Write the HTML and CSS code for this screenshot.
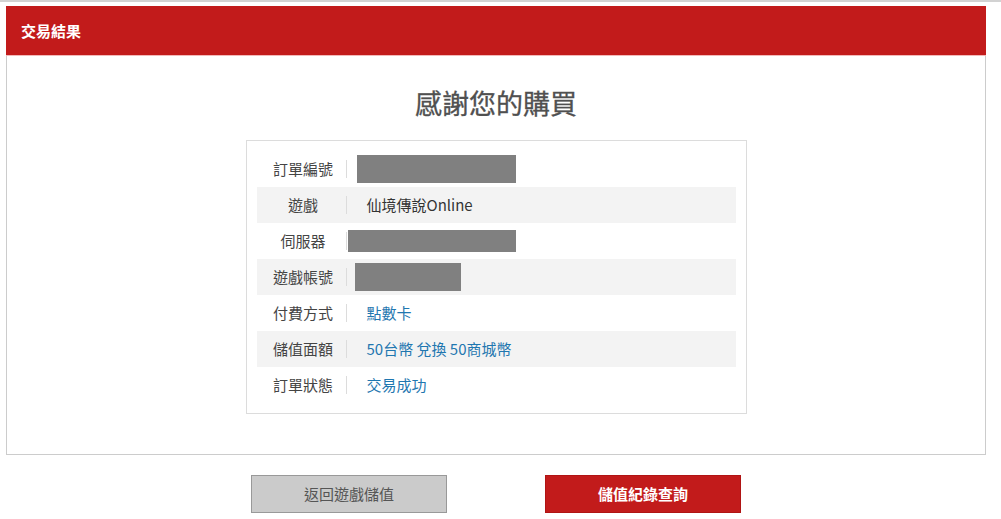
FILE: index.html
```html
<!DOCTYPE html>
<html lang="zh-Hant">
<head>
<meta charset="utf-8">
<title>交易結果</title>
<link rel="stylesheet" href="styles.css">
</head>
<body>
<div class="page">
  <div class="panel">
    <div class="panel-head">交易結果</div>
    <div class="panel-body">
      <h1 class="title">感謝您的購買</h1>
      <div class="info-box">
        <div class="row">
          <div class="label">訂單編號</div>
          <div class="value"><span class="mask mask-order"></span></div>
        </div>
        <div class="row alt">
          <div class="label">遊戲</div>
          <div class="value">仙境傳說Online</div>
        </div>
        <div class="row">
          <div class="label">伺服器</div>
          <div class="value"><span class="mask mask-server"></span></div>
        </div>
        <div class="row alt">
          <div class="label">遊戲帳號</div>
          <div class="value"><span class="mask mask-account"></span></div>
        </div>
        <div class="row">
          <div class="label">付費方式</div>
          <div class="value link">點數卡</div>
        </div>
        <div class="row alt">
          <div class="label">儲值面額</div>
          <div class="value link">50台幣 兌換 50商城幣</div>
        </div>
        <div class="row">
          <div class="label">訂單狀態</div>
          <div class="value link">交易成功</div>
        </div>
      </div>
    </div>
  </div>
  <div class="actions">
    <a class="btn btn-gray" href="#">返回遊戲儲值</a>
    <a class="btn btn-red" href="#">儲值紀錄查詢</a>
  </div>
</div>
</body>
</html>
```

FILE: styles.css
```css
* { box-sizing: border-box; }
html, body { margin: 0; padding: 0; background: #fff; }
body {
  font-family: "Noto Sans CJK TC", "Noto Sans", sans-serif;
  color: #444;
  font-size: 15px;
}
.page {
  border-top: 2px solid #d2d2d2;
  padding: 4px 15px 0 6px;
  width: 1001px;
}
.panel { width: 980px; }
.panel-head {
  height: 50px;
  background: #c21b1b;
  color: #fff;
  font-weight: bold;
  font-size: 15px;
  line-height: 50px;
  padding-left: 15px;
  border-bottom: 1px solid #f3b9b9;
}
.panel-body {
  border: 1px solid #cccccc;
  border-top: none;
  width: 980px;
  padding: 28px 0 40px;
  display: flex;
  flex-direction: column;
  align-items: center;
}
.title {
  margin: 0 0 18px;
  font-size: 27px;
  line-height: 38px;
  font-weight: normal;
  color: #505050;
  -webkit-text-stroke: 0.3px #505050;
}
.info-box {
  width: 501px;
  border: 1px solid #dcdcdc;
  padding: 10px;
}
.row {
  height: 36px;
  display: flex;
  align-items: center;
}
.row.alt { background: #f3f3f3; }
.label {
  width: 90px;
  height: 18px;
  line-height: 18px;
  text-align: center;
  border-right: 1px solid #dcdcdc;
  color: #444;
  padding-left: 4px;
}
.value {
  padding-left: 20px;
  color: #333;
  line-height: 18px;
  display: flex;
  align-items: center;
}
.value.link { color: #1f77b0; }
.mask {
  display: block;
  background: #808080;
}
.mask-order { width: 159px; height: 28px; margin-left: -10px; }
.mask-server { width: 168px; height: 22px; margin-left: -19px; }
.mask-account { width: 106px; height: 28px; margin-left: -12px; }
.actions {
  display: flex;
  justify-content: center;
  gap: 98px;
  margin-top: 20px;
  width: 980px;
}
.btn {
  width: 196px;
  height: 38px;
  line-height: 36px;
  text-align: center;
  text-decoration: none;
  font-size: 15px;
}
.btn-gray {
  background: #cbcbcb;
  border: 1px solid #999;
  color: #555;
}
.btn-red {
  background: #c21b1b;
  border: 1px solid #b01414;
  color: #fff;
  font-weight: bold;
}
```
